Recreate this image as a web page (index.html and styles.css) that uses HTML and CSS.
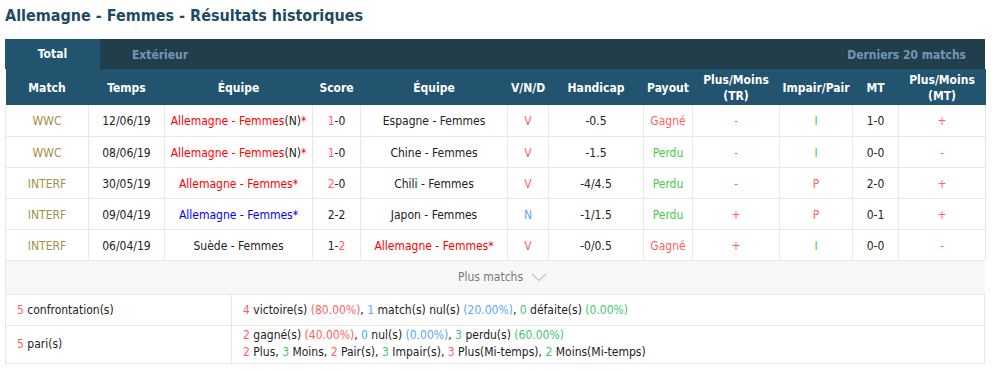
FILE: index.html
```html
<!DOCTYPE html>
<html lang="fr">
<head>
<meta charset="utf-8">
<title>Résultats historiques</title>
<link rel="stylesheet" href="styles.css">
</head>
<body>
<h2 class="title">Allemagne - Femmes - Résultats historiques</h2>
<div class="panel">
  <div class="tabs">
    <div class="tab active">Total</div>
    <div class="tab">Extérieur</div>
    <div class="tabs-right">Derniers 20 matchs</div>
  </div>
  <table class="results">
    <colgroup>
      <col style="width:83px"><col style="width:76px"><col style="width:148px"><col style="width:48px">
      <col style="width:147px"><col style="width:41px"><col style="width:95px"><col style="width:49px">
      <col style="width:87px"><col style="width:73px"><col style="width:46px"><col style="width:87px">
    </colgroup>
    <thead>
      <tr>
        <th>Match</th><th>Temps</th><th>Équipe</th><th>Score</th><th>Équipe</th><th>V/N/D</th>
        <th>Handicap</th><th>Payout</th><th>Plus/Moins<br>(TR)</th><th>Impair/Pair</th><th>MT</th><th>Plus/Moins<br>(MT)</th>
      </tr>
    </thead>
    <tbody>
      <tr>
        <td class="lg">WWC</td><td>12/06/19</td><td class="red">Allemagne - Femmes<span class="dk">(N)</span>*</td>
        <td><span class="sr">1</span>-0</td><td>Espagne - Femmes</td><td class="sr">V</td><td>-0.5</td>
        <td class="sr">Gagné</td><td class="gr">-</td><td class="gr">I</td><td>1-0</td><td class="sr">+</td>
      </tr>
      <tr>
        <td class="lg">WWC</td><td>08/06/19</td><td class="red">Allemagne - Femmes<span class="dk">(N)</span>*</td>
        <td><span class="sr">1</span>-0</td><td>Chine - Femmes</td><td class="sr">V</td><td>-1.5</td>
        <td class="gr">Perdu</td><td class="gr">-</td><td class="gr">I</td><td>0-0</td><td class="gr">-</td>
      </tr>
      <tr>
        <td class="lg">INTERF</td><td>30/05/19</td><td class="red">Allemagne - Femmes*</td>
        <td><span class="sr">2</span>-0</td><td>Chili - Femmes</td><td class="sr">V</td><td>-4/4.5</td>
        <td class="gr">Perdu</td><td class="gr">-</td><td class="sr">P</td><td>2-0</td><td class="sr">+</td>
      </tr>
      <tr>
        <td class="lg">INTERF</td><td>09/04/19</td><td class="blue">Allemagne - Femmes*</td>
        <td>2-2</td><td>Japon - Femmes</td><td class="lb">N</td><td>-1/1.5</td>
        <td class="gr">Perdu</td><td class="sr">+</td><td class="sr">P</td><td>0-1</td><td class="sr">+</td>
      </tr>
      <tr>
        <td class="lg">INTERF</td><td>06/04/19</td><td>Suède - Femmes</td>
        <td>1-<span class="sr">2</span></td><td class="red">Allemagne - Femmes*</td><td class="sr">V</td><td>-0/0.5</td>
        <td class="sr">Gagné</td><td class="sr">+</td><td class="gr">I</td><td>0-0</td><td class="gr">-</td>
      </tr>
    </tbody>
  </table>
  <div class="more">Plus matchs
    <svg class="chev" width="16" height="9" viewBox="0 0 16 9"><polyline points="1,1 8,7.5 15,1" fill="none" stroke="#c4c4c4" stroke-width="1.2"/></svg>
  </div>
  <table class="summary">
    <tr>
      <td class="sl"><span class="sr">5</span> confrontation(s)</td>
      <td><span class="sr">4</span> victoire(s) <span class="sr">(80.00%)</span>, <span class="lb">1</span> match(s) nul(s) <span class="lb">(20.00%)</span>, <span class="sg">0</span> défaite(s) <span class="sg">(0.00%)</span></td>
    </tr>
    <tr class="tall">
      <td class="sl"><span class="sr">5</span> pari(s)</td>
      <td><div><span class="sr">2</span> gagné(s) <span class="sr">(40.00%)</span>, <span class="lb">0</span> nul(s) <span class="lb">(0.00%)</span>, <span class="sg">3</span> perdu(s) <span class="sg">(60.00%)</span></div>
      <div><span class="sr">2</span> Plus, <span class="sg">3</span> Moins, <span class="sr">2</span> Pair(s), <span class="sg">3</span> Impair(s), <span class="sr">3</span> Plus(Mi-temps), <span class="sg">2</span> Moins(Mi-temps)</div></td>
    </tr>
  </table>
</div>
</body>
</html>
```
FILE: styles.css
```css
* { box-sizing: border-box; }
body {
  margin: 0;
  background: #fff;
  font-family: Tahoma, "DejaVu Sans Condensed", "DejaVu Sans", sans-serif;
  font-size: 12px;
  color: #222;
}
.title {
  margin: 0;
  padding: 6px 0 0 5px;
  height: 39px;
  font-size: 16px;
  font-weight: bold;
  color: #1e4a64;
}
.panel {
  margin-left: 5px;
  width: 980px;
}
.tabs {
  display: flex;
  align-items: stretch;
  height: 30px;
  padding-top: 1px;
  background: #233e4b;
  font-weight: bold;
  font-size: 12px;
}
.tab {
  display: flex;
  align-items: center;
  justify-content: center;
  width: 120px;
  color: #6e99b6;
}
.tab.active {
  width: 95px;
  margin-top: -1px;
  background: #22546f;
  color: #fff;
}
.tabs-right {
  margin-left: auto;
  padding-right: 19px;
  display: flex;
  align-items: center;
  color: #6e99b6;
}
.results, .summary {
  width: 980px;
  border-collapse: collapse;
  table-layout: fixed;
}
.results th {
  background: #22546f;
  color: #fff;
  font-weight: bold;
  height: 36px;
  padding: 1px 0 0;
  text-align: center;
  line-height: 16px;
}
.results td {
  height: 31px;
  padding: 2px 0 0;
  text-align: center;
  border: 1px solid #e8e8e8;
  white-space: nowrap;
  color: #222;
}
.results tbody tr:first-child td { border-top: none; }
.lg { color: #a38f48 !important; }
.red { color: #ff0000 !important; }
.blue { color: #0000ff !important; }
.dk { color: #222; }
.sr { color: #ff6161 !important; }
.gr { color: #44cc44 !important; }
.lb { color: #5aa6f5 !important; }
.sg { color: #3ec86a !important; }
.more {
  height: 33px;
  padding-left: 14px;
  background: #f7f7f7;
  color: #777;
  display: flex;
  align-items: center;
  justify-content: center;
  gap: 8px;
  border-left: 1px solid #e8e8e8;
}
.chev { display: block; }
.summary td {
  border: 1px solid #e6e6e6;
  height: 31px;
  padding: 0 11px;
  text-align: left;
}
.summary td.sl { width: 226px; }
.summary tr.tall td { height: 38px; line-height: 17px; }
```
